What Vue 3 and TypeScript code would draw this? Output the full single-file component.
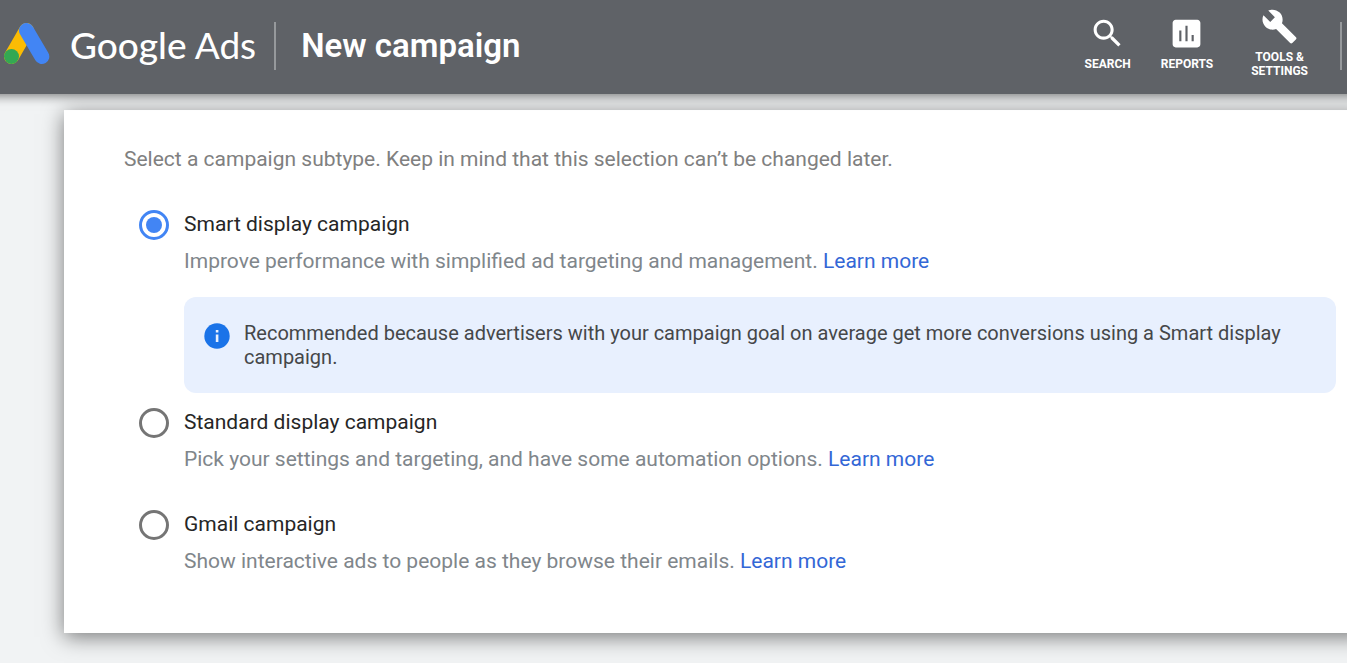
<script setup lang="ts">
import { ref } from 'vue'

interface Subtype {
  id: string
  title: string
  description: string
  note?: string
}

interface Tool {
  id: string
  lines: string[]
  path: string
}

const selected = ref('smart')

const tools: Tool[] = [
  {
    id: 'search',
    lines: ['SEARCH'],
    path: 'M15.5 14h-.79l-.28-.27C15.41 12.59 16 11.11 16 9.5 16 5.91 13.09 3 9.5 3S3 5.91 3 9.5 5.91 16 9.5 16c1.61 0 3.09-.59 4.23-1.57l.27.28v.79l5 4.99L20.49 19l-4.99-5zm-6 0C7.01 14 5 11.99 5 9.5S7.01 5 9.5 5 14 7.01 14 9.5 11.99 14 9.5 14z',
  },
  {
    id: 'reports',
    lines: ['REPORTS'],
    path: 'M19 3H5c-1.1 0-2 .9-2 2v14c0 1.1.9 2 2 2h14c1.1 0 2-.9 2-2V5c0-1.1-.9-2-2-2zM8.7 17H7.3v-7h1.4v7zm4 0h-1.4V7h1.4v10zm4 0h-1.4v-4h1.4v4z',
  },
  {
    id: 'tools',
    lines: ['TOOLS &', 'SETTINGS'],
    path: 'M22.7 19l-9.1-9.1c.9-2.3.4-5-1.5-6.9-2-2-5-2.4-7.4-1.3L9 6 6 9 1.6 4.7C.4 7.1.9 10.1 2.9 12.1c1.9 1.9 4.6 2.4 6.9 1.5l9.1 9.1c.4.4 1 .4 1.4 0l2.3-2.3c.5-.4.5-1.1.1-1.4z',
  },
]

const subtypes: Subtype[] = [
  {
    id: 'smart',
    title: 'Smart display campaign',
    description: 'Improve performance with simplified ad targeting and management.',
    note: 'Recommended because advertisers with your campaign goal on average get more conversions using a Smart display campaign.',
  },
  {
    id: 'standard',
    title: 'Standard display campaign',
    description: 'Pick your settings and targeting, and have some automation options.',
  },
  {
    id: 'gmail',
    title: 'Gmail campaign',
    description: 'Show interactive ads to people as they browse their emails.',
  },
]
</script>

<template>
  <div class="page">
    <header class="topbar">
      <svg class="logo" viewBox="0 0 46 42" aria-hidden="true">
        <path d="M7.5 33.5 22.5 7.5" stroke="#fbbc04" stroke-width="15" stroke-linecap="round" />
        <path d="M22.5 7.5 37.8 33.5" stroke="#4285f4" stroke-width="15" stroke-linecap="round" />
        <circle cx="7.5" cy="33.5" r="7.5" fill="#34a853" />
      </svg>
      <span class="brand"><span class="brand-strong">Google</span> Ads</span>
      <span class="divider"></span>
      <h1>New campaign</h1>
      <nav class="tools">
        <button v-for="tool in tools" :key="tool.id" type="button" class="tool">
          <svg viewBox="0 0 24 24" aria-hidden="true"><path :d="tool.path" /></svg>
          <span v-for="line in tool.lines" :key="line" class="tool-line">{{ line }}</span>
        </button>
      </nav>
      <span class="divider"></span>
    </header>

    <main class="card">
      <fieldset>
        <legend>Select a campaign subtype. Keep in mind that this selection can’t be changed later.</legend>
        <div v-for="item in subtypes" :key="item.id" class="option" :class="{ noted: item.note }">
          <input :id="item.id" v-model="selected" type="radio" name="subtype" :value="item.id" />
          <div class="body">
            <label :for="item.id">{{ item.title }}</label>
            <p class="description">{{ item.description }} <a href="#">Learn more</a></p>
            <div v-if="item.note" class="note">
              <svg viewBox="0 0 26 26" aria-hidden="true">
                <circle cx="13" cy="13" r="12.7" fill="#1a73e8" />
                <path d="M11.8 7h2.6v2.4h-2.6zM11.8 11.6h2.6V19h-2.6z" fill="#e8f0fe" />
              </svg>
              <p>{{ item.note }}</p>
            </div>
          </div>
        </div>
      </fieldset>
    </main>
  </div>
</template>

<style>
body {
  margin: 0;
  background: #f1f3f4;
}
</style>

<style scoped>
.page {
  min-height: 100vh;
  overflow: hidden;
  background: #f1f3f4;
  font-family: Roboto, "Liberation Sans", sans-serif;
  font-size: 21px;
  line-height: 30px;
}

.topbar {
  position: relative;
  z-index: 1;
  display: flex;
  align-items: center;
  box-sizing: border-box;
  height: 94px;
  margin: 0 -20px;
  padding: 0 25px 2px 24px;
  background: #5f6267;
  box-shadow: 0 2px 10px rgba(0, 0, 0, 0.5);
  color: #fff;
}

.logo {
  width: 46px;
  height: 42px;
  margin-top: -4px;
  fill: none;
}

.brand {
  margin: 0 18px 0 20px;
  padding-bottom: 2px;
  font-family: Lato, "Open Sans", sans-serif;
  font-size: 37px;
  line-height: 48px;
  white-space: nowrap;
}

.brand-strong {
  font-weight: 500;
}

.divider {
  width: 2px;
  height: 48px;
  background: #96999c;
}

h1 {
  margin: 0 0 0 25px;
  font-size: 33px;
  font-weight: 600;
  line-height: 48px;
  white-space: nowrap;
}

.tools {
  display: flex;
  align-items: center;
  gap: 30px;
  margin-left: auto;
  margin-right: 32px;
  padding-bottom: 6px;
}

.tool {
  display: flex;
  flex-direction: column;
  align-items: center;
  padding: 0;
  border: 0;
  background: none;
  color: #fff;
  font-family: inherit;
  font-size: 12px;
  font-weight: 700;
  line-height: 14px;
  cursor: pointer;
}

.tool:last-child {
  margin-left: 8px;
}

.tool svg {
  width: 37px;
  height: 37px;
  margin-bottom: 5px;
  fill: #fff;
}

.card {
  margin: 16px -20px 30px 64px;
  padding: 34px 31px 57px 60px;
  background: #fff;
  box-shadow: 0 4px 20px rgba(0, 0, 0, 0.5);
}

fieldset {
  min-width: 0;
  margin: 0;
  padding: 0;
  border: 0;
}

legend {
  padding: 0;
  margin-bottom: 35px;
  color: #808080;
}

.option {
  display: flex;
  gap: 15px;
  padding-left: 15px;
}

.option + .option {
  margin-top: 35px;
}

.option.noted + .option {
  margin-top: 14px;
}

input {
  flex: none;
  appearance: none;
  box-sizing: border-box;
  width: 30px;
  height: 30px;
  margin: 1px 0 0;
  padding: 4px;
  border: 3px solid #757575;
  border-radius: 50%;
  background: #fff;
}

input:checked {
  border-color: #4285f4;
  background: #4285f4 content-box;
}

.body {
  flex: 1;
  min-width: 0;
}

label {
  display: block;
  color: #262626;
}

p {
  margin: 0;
}

.description {
  margin-top: 7px;
  color: #80868b;
}

a {
  color: #3367d6;
  text-decoration: none;
}

.note {
  display: flex;
  gap: 14px;
  margin-top: 21px;
  padding: 24px 30px 24px 20px;
  border-radius: 12px;
  background: #e8f0fe;
  color: #454749;
  font-size: 20px;
  line-height: 24px;
}

.note svg {
  flex: none;
  width: 26px;
  height: 26px;
  margin-top: 2px;
}
</style>
